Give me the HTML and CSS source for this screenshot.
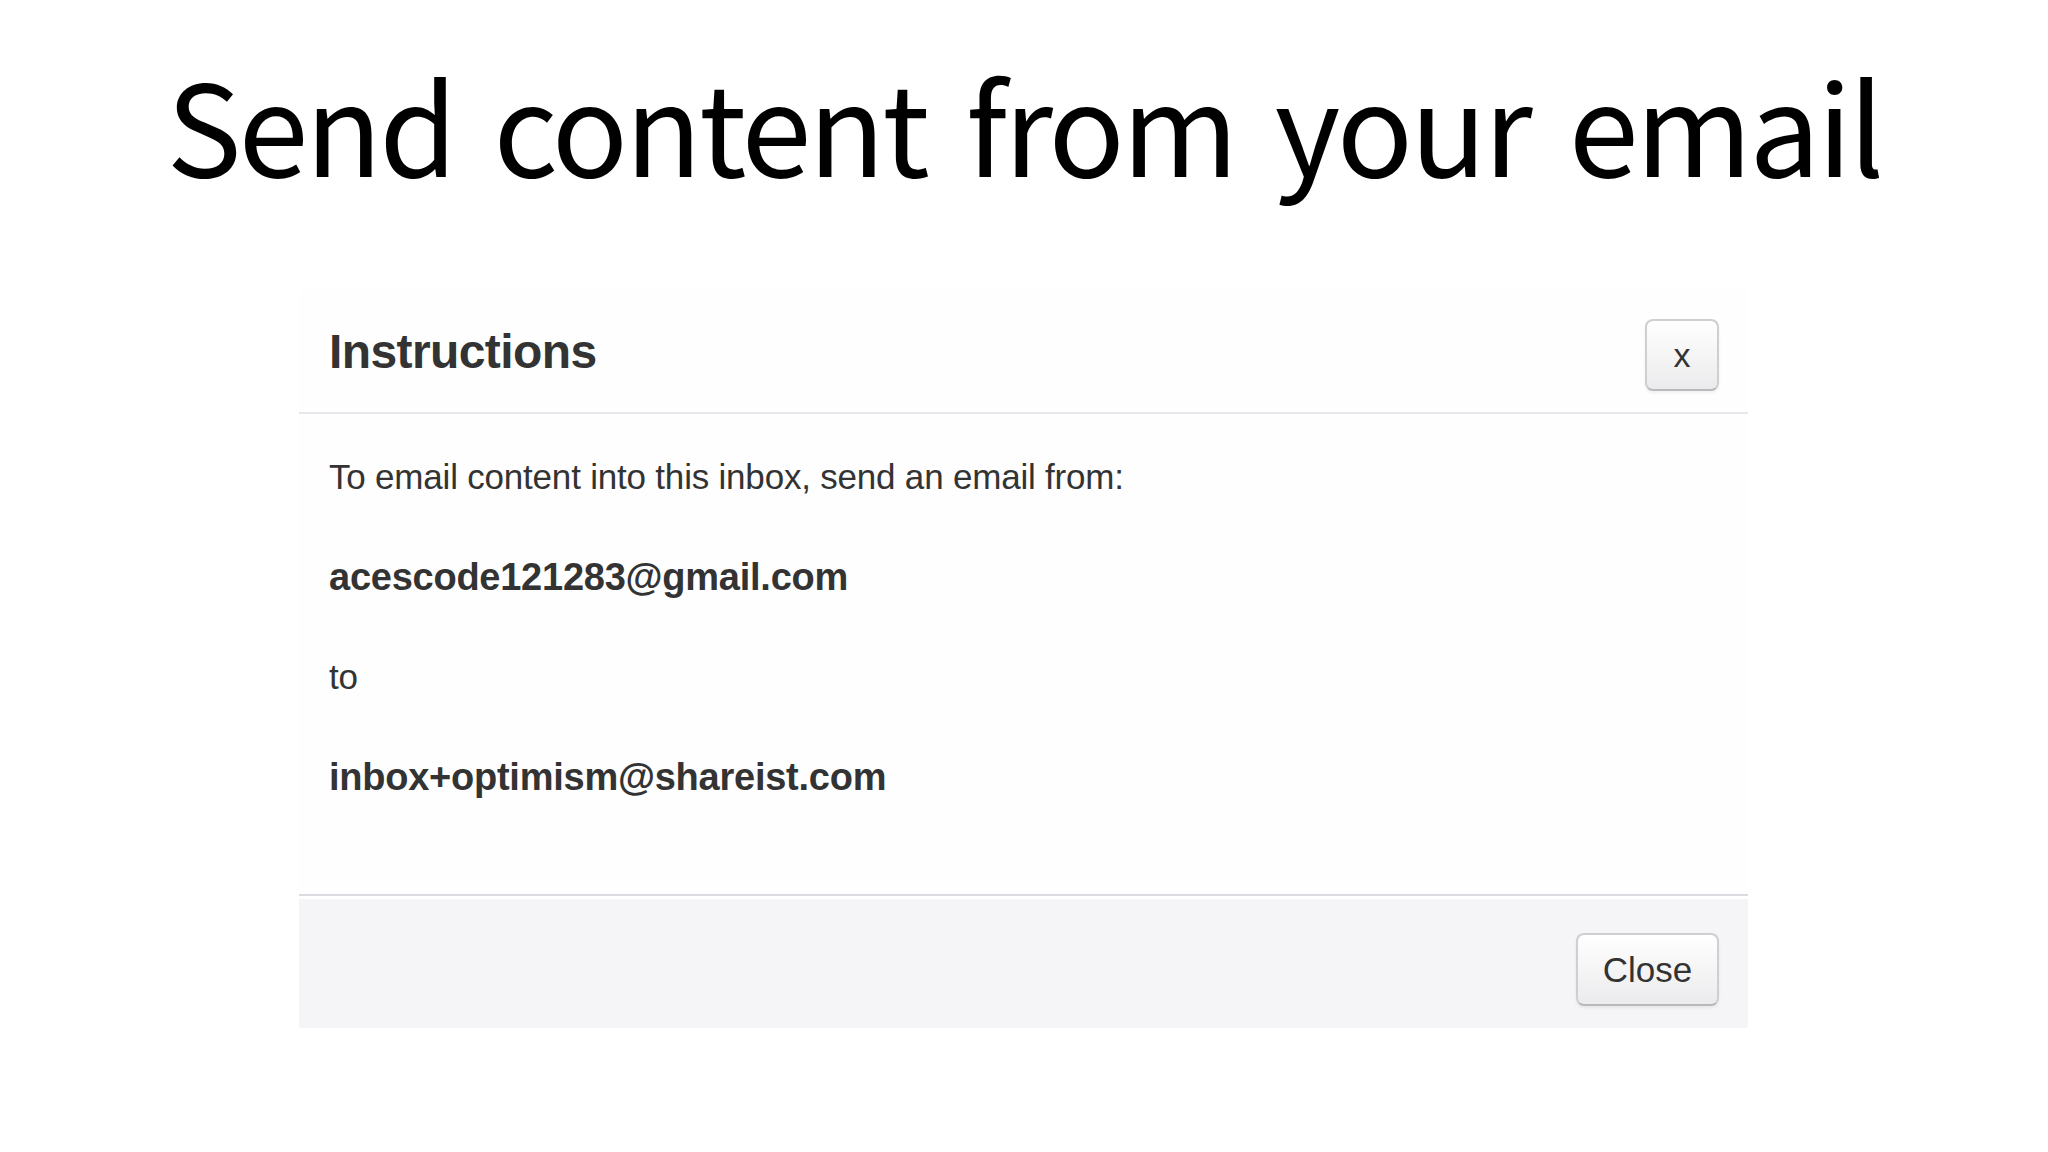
FILE: index.html
```html
<!DOCTYPE html>
<html lang="en">
<head>
<meta charset="utf-8">
<title>Send content from your email</title>
<link rel="stylesheet" href="styles.css">
</head>
<body>
<header class="slide-title">
  <h1 class="slide-title__text">Send content from your email</h1>
</header>
<section class="modal">
  <div class="modal-header">
    <h3 class="modal-title">Instructions</h3>
    <button class="btn btn-x" type="button">x</button>
  </div>
  <div class="modal-body">
    <p class="modal-line">To email content into this inbox, send an email from:</p>
    <p class="modal-line modal-line--strong">acescode121283@gmail.com</p>
    <p class="modal-line">to</p>
    <p class="modal-line modal-line--strong">inbox+optimism@shareist.com</p>
  </div>
  <div class="modal-footer">
    <button class="btn btn-close" type="button">Close</button>
  </div>
</section>
</body>
</html>
```

FILE: styles.css
```css
html, body {
  margin: 0;
  padding: 0;
  background: #ffffff;
}

body {
  width: 2048px;
  height: 1152px;
  overflow: hidden;
  font-family: "Liberation Sans", Arial, sans-serif;
  color: #333333;
}

.slide-title {
  height: 290px;
  box-sizing: border-box;
  padding-top: 59px;
  text-align: center;
}

.slide-title__text {
  margin: 0;
  font-family: "Noto Sans CJK KR", "Noto Sans", sans-serif;
  font-weight: 400;
  font-size: 126px;
  line-height: 126px;
  color: #000000;
  letter-spacing: -3px;
  word-spacing: 14px;
  white-space: nowrap;
}

.modal {
  width: 1449px;
  margin-left: 299px;
  background: #fefefe;
}

.modal-header {
  display: flex;
  align-items: center;
  justify-content: space-between;
  padding: 29px 29px 21px 30px;
  border-bottom: 2px solid #e8e8ec;
}

.modal-title {
  margin: -6px 0 0 0;
  font-size: 48px;
  line-height: 56px;
  font-weight: 700;
  letter-spacing: -0.6px;
  color: #333333;
}

.btn {
  box-sizing: border-box;
  font-family: "Liberation Sans", Arial, sans-serif;
  color: #333333;
  border: 2px solid #cfcfd2;
  border-bottom-color: #b9b9bc;
  border-radius: 8px;
  background: linear-gradient(#ffffff, #ebebed);
  box-shadow: inset 0 2px 0 rgba(255,255,255,0.4), 0 2px 3px rgba(0,0,0,0.06);
  padding: 0;
  cursor: pointer;
}

.btn-x {
  width: 74px;
  height: 72px;
  font-size: 34px;
  line-height: 1;
}

.modal-body {
  padding: 43px 30px 97px 30px;
}

.modal-line {
  margin: 0 0 60px 0;
  font-size: 35px;
  line-height: 40px;
  letter-spacing: -0.2px;
}

.modal-line:last-child {
  margin-bottom: 0;
}

.modal-line--strong {
  font-size: 38px;
  font-weight: 700;
  letter-spacing: -0.25px;
}

.modal-footer {
  display: flex;
  justify-content: flex-end;
  padding: 37px 29px 22px 29px;
  border-top: 2px solid #dcdce0;
  box-shadow: inset 0 3px 0 #ffffff;
  background: #f5f4f7;
  border-radius: 0 0 4px 4px;
}

.btn-close {
  width: 143px;
  height: 73px;
  font-size: 35px;
  line-height: 1;
}
```
